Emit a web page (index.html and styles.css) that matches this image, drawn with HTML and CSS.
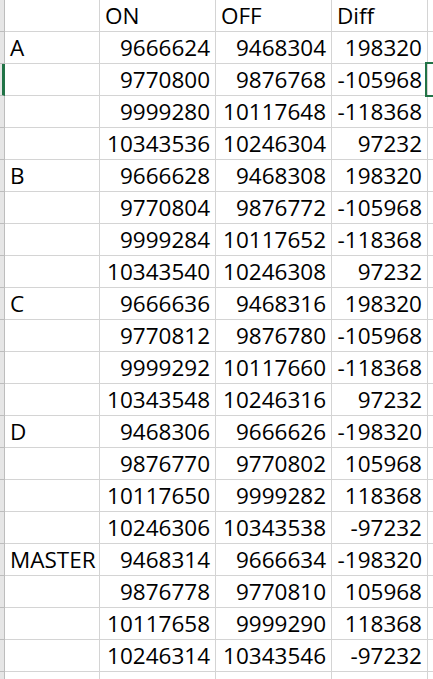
FILE: index.html
```html
<!DOCTYPE html>
<html>
<head>
<meta charset="utf-8">
<link rel="stylesheet" href="styles.css">
</head>
<body>
<div class="sheet">
  <div class="grid">
    <div class="rh"></div><div class="c"></div><div class="c">ON</div><div class="c">OFF</div><div class="c">Diff</div><div class="c e"></div>
    <div class="rh"></div><div class="c">A</div><div class="c n">9666624</div><div class="c n">9468304</div><div class="c n">198320</div><div class="c e"></div>
    <div class="rh sel"></div><div class="c"></div><div class="c n">9770800</div><div class="c n">9876768</div><div class="c n">-105968</div><div class="c e"></div>
    <div class="rh"></div><div class="c"></div><div class="c n">9999280</div><div class="c n">10117648</div><div class="c n">-118368</div><div class="c e"></div>
    <div class="rh"></div><div class="c"></div><div class="c n">10343536</div><div class="c n">10246304</div><div class="c n">97232</div><div class="c e"></div>
    <div class="rh"></div><div class="c">B</div><div class="c n">9666628</div><div class="c n">9468308</div><div class="c n">198320</div><div class="c e"></div>
    <div class="rh"></div><div class="c"></div><div class="c n">9770804</div><div class="c n">9876772</div><div class="c n">-105968</div><div class="c e"></div>
    <div class="rh"></div><div class="c"></div><div class="c n">9999284</div><div class="c n">10117652</div><div class="c n">-118368</div><div class="c e"></div>
    <div class="rh"></div><div class="c"></div><div class="c n">10343540</div><div class="c n">10246308</div><div class="c n">97232</div><div class="c e"></div>
    <div class="rh"></div><div class="c">C</div><div class="c n">9666636</div><div class="c n">9468316</div><div class="c n">198320</div><div class="c e"></div>
    <div class="rh"></div><div class="c"></div><div class="c n">9770812</div><div class="c n">9876780</div><div class="c n">-105968</div><div class="c e"></div>
    <div class="rh"></div><div class="c"></div><div class="c n">9999292</div><div class="c n">10117660</div><div class="c n">-118368</div><div class="c e"></div>
    <div class="rh"></div><div class="c"></div><div class="c n">10343548</div><div class="c n">10246316</div><div class="c n">97232</div><div class="c e"></div>
    <div class="rh"></div><div class="c">D</div><div class="c n">9468306</div><div class="c n">9666626</div><div class="c n">-198320</div><div class="c e"></div>
    <div class="rh"></div><div class="c"></div><div class="c n">9876770</div><div class="c n">9770802</div><div class="c n">105968</div><div class="c e"></div>
    <div class="rh"></div><div class="c"></div><div class="c n">10117650</div><div class="c n">9999282</div><div class="c n">118368</div><div class="c e"></div>
    <div class="rh"></div><div class="c"></div><div class="c n">10246306</div><div class="c n">10343538</div><div class="c n">-97232</div><div class="c e"></div>
    <div class="rh"></div><div class="c">MASTER</div><div class="c n">9468314</div><div class="c n">9666634</div><div class="c n">-198320</div><div class="c e"></div>
    <div class="rh"></div><div class="c"></div><div class="c n">9876778</div><div class="c n">9770810</div><div class="c n">105968</div><div class="c e"></div>
    <div class="rh"></div><div class="c"></div><div class="c n">10117658</div><div class="c n">9999290</div><div class="c n">118368</div><div class="c e"></div>
    <div class="rh"></div><div class="c"></div><div class="c n">10246314</div><div class="c n">10343546</div><div class="c n">-97232</div><div class="c e"></div>
    <div class="rh"></div><div class="c"></div><div class="c"></div><div class="c"></div><div class="c"></div><div class="c e"></div>
  </div>
  <div class="cursor"></div>
</div>
</body>
</html>
```
FILE: styles.css
```css
html, body {
  margin: 0;
  padding: 0;
  background: #ffffff;
  overflow: hidden;
}
.sheet {
  position: relative;
  width: 433px;
  height: 679px;
  overflow: hidden;
}
.grid {
  display: grid;
  grid-template-columns: 5px 95px 116px 116px 96px 40px;
  grid-auto-rows: 32px;
  font-family: "Open Sans", "Liberation Sans", sans-serif;
  font-size: 22.5px;
  color: #000000;
}
.rh {
  box-sizing: border-box;
  background: #e6e6e6;
  border-right: 1px solid #bdbdbd;
  border-bottom: 1px solid #bdbdbd;
}
.rh.sel {
  border-right: 3px solid #217346;
}
.c {
  box-sizing: border-box;
  border-right: 1px solid #d4d4d4;
  border-bottom: 1px solid #d4d4d4;
  padding: 0 5px 0 5px;
  line-height: 31px;
  white-space: nowrap;
  overflow: hidden;
}
.n {
  text-align: right;
}
.cursor {
  position: absolute;
  left: 425px;
  top: 62px;
  width: 20px;
  height: 35px;
  box-sizing: border-box;
  border: 2px solid #217346;
}
```
